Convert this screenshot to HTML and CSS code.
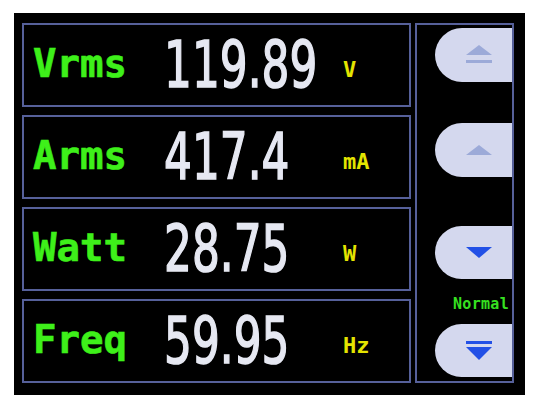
FILE: index.html
```html
<!DOCTYPE html>
<html lang="en">
<head>
<meta charset="UTF-8">
<meta name="viewport" content="width=device-width, initial-scale=1.0">
<title>Power Meter</title>
<link rel="stylesheet" href="styles.css">
</head>
<body>

<div class="screen">
  <div class="readings">
    <div class="reading">
      <span class="label">Vrms</span>
      <span class="value"><span class="digits">119.89</span></span>
      <span class="unit">V</span>
    </div>
    <div class="reading">
      <span class="label">Arms</span>
      <span class="value"><span class="digits">417.4</span></span>
      <span class="unit">mA</span>
    </div>
    <div class="reading">
      <span class="label">Watt</span>
      <span class="value"><span class="digits">28.75</span></span>
      <span class="unit">W</span>
    </div>
    <div class="reading">
      <span class="label">Freq</span>
      <span class="value"><span class="digits">59.95</span></span>
      <span class="unit">Hz</span>
    </div>
  </div>

  <div class="side">
    <button class="btn btn-top disabled">
      <svg width="28" height="20" viewBox="0 0 28 20">
        <polygon points="1,10 14,0 27,10"/>
        <rect x="1" y="15" width="26" height="3"/>
      </svg>
    </button>
    <button class="btn btn-up disabled">
      <svg width="28" height="20" viewBox="0 0 28 20">
        <polygon points="1,15 14,5 27,15"/>
      </svg>
    </button>
    <button class="btn btn-down">
      <svg width="28" height="20" viewBox="0 0 28 20">
        <polygon points="1,4 27,4 14,15"/>
      </svg>
    </button>
    <div class="mode">Normal</div>
    <button class="btn btn-bottom">
      <svg width="28" height="22" viewBox="0 0 28 22">
        <rect x="1" y="1" width="26" height="3"/>
        <polygon points="1,7 27,7 14,20"/>
      </svg>
    </button>
  </div>
</div>

</body>
</html>
```

FILE: styles.css
```css
* {
  box-sizing: border-box;
}
body {
  margin: 0;
  background-color: #ffffff;
  font-family: "DejaVu Sans Mono", monospace;
}
.screen {
  width: 511px;
  height: 382px;
  margin: 13px 0 0 14px;
  padding: 10px 0 0 8px;
  background-color: #000;
  display: flex;
  gap: 4px;
}
.readings {
  width: 389px;
  display: flex;
  flex-direction: column;
  gap: 8px;
}
.reading {
  height: 84px;
  border: 2px solid #56609a;
  padding-left: 9px;
  display: flex;
  align-items: center;
}
.label {
  width: 134px;
  font-size: 39px;
  font-weight: bold;
  line-height: 1;
  color: #3ef01a;
  -webkit-text-stroke: 0.6px #3ef01a;
  margin-top: -4px;
}
.value {
  width: 176px;
  line-height: 1;
}
.digits {
  display: inline-block;
  font-family: "DejaVu Sans", sans-serif;
  font-size: 64px;
  color: #e6e8f2;
  -webkit-text-stroke: 1.6px #e6e8f2;
  transform: scaleX(0.685);
  transform-origin: left center;
  margin-left: -3px;
}
.unit {
  font-size: 22px;
  font-weight: bold;
  line-height: 1;
  color: #e4e400;
  margin-top: 10px;
}
.side {
  width: 99px;
  height: 360px;
  border: 2px solid #56609a;
  padding-top: 3px;
  display: flex;
  flex-direction: column;
  align-items: flex-end;
}
.btn {
  width: 77px;
  height: 54px;
  padding: 0 0 0 10px;
  border: none;
  border-radius: 27px 0 0 27px;
  background-color: #d4d8ee;
  display: flex;
  align-items: center;
  justify-content: center;
}
.btn svg {
  fill: #2250e6;
}
.btn.disabled svg {
  fill: #9caad8;
}
.btn-up {
  margin-top: 41px;
}
.btn-down {
  margin-top: 49px;
  height: 53px;
}
.btn-bottom {
  height: 53px;
}
.mode {
  margin: 18px 3px 12px 0;
  font-size: 15px;
  font-weight: bold;
  line-height: 15px;
  letter-spacing: 0.3px;
  color: #36e020;
}
```
